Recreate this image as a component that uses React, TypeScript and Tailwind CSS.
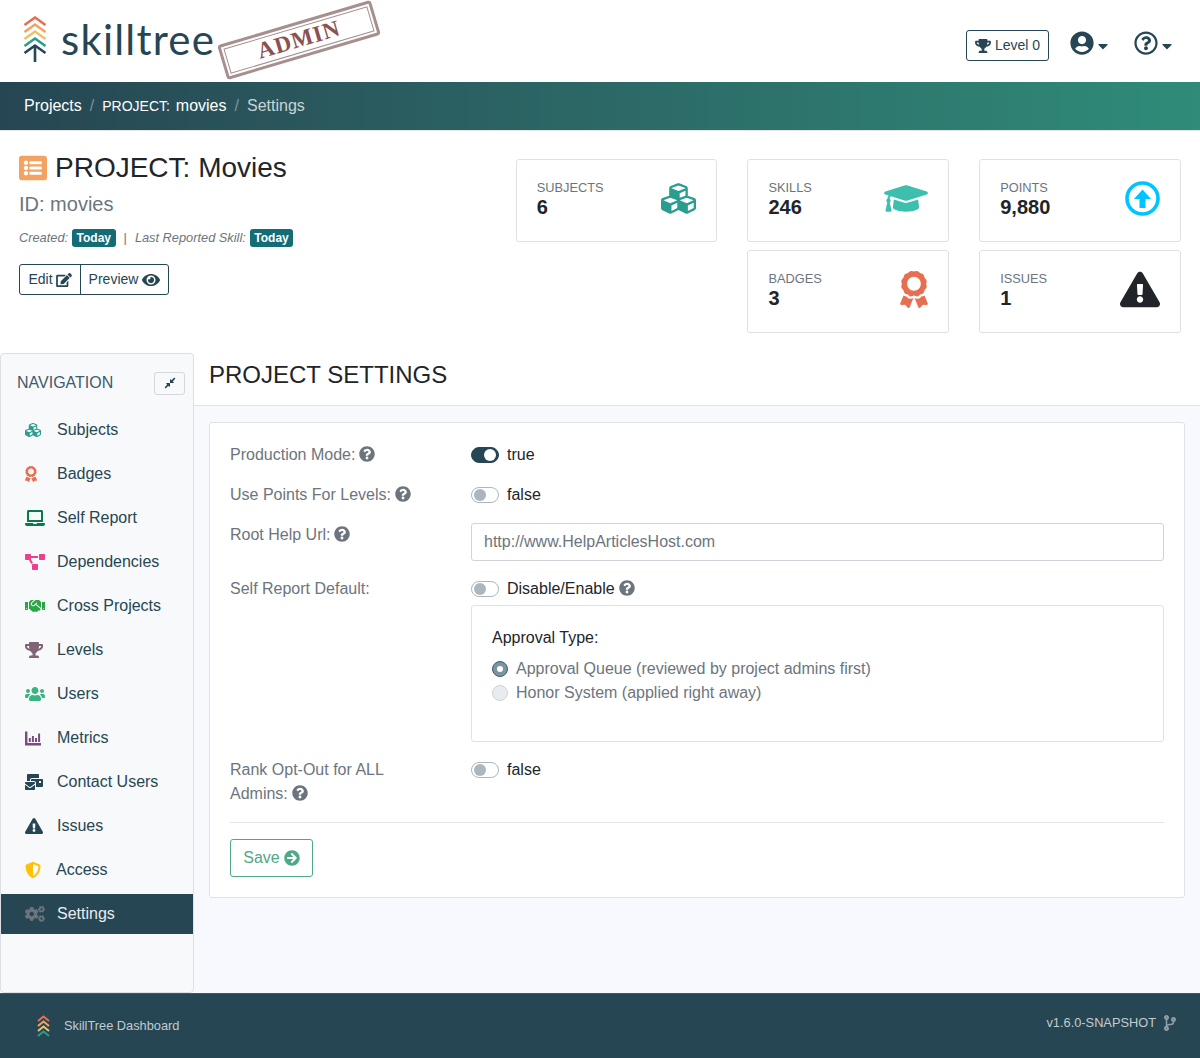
import React from "react";
import {
  FaAward,
  FaArrowCircleRight,
  FaCaretDown,
  FaCodeBranch,
  FaCogs,
  FaCompressAlt,
  FaCubes,
  FaEdit,
  FaExclamationTriangle,
  FaEye,
  FaGraduationCap,
  FaHandshake,
  FaLaptop,
  FaListAlt,
  FaMailBulk,
  FaProjectDiagram,
  FaQuestionCircle,
  FaRegQuestionCircle,
  FaShieldAlt,
  FaTrophy,
  FaUserCircle,
  FaUsers,
} from "react-icons/fa";

const MetricsIcon = ({ className }: { className?: string }) => (
  <svg viewBox="0 0 16 16" className={className} fill="currentColor">
    <path d="M0 1.5h2.4v11.6H16v2.4H0z" />
    <path d="M3.8 8h2v4H3.8zM6.9 6h2v6h-2zM10 8h2v4h-2zM13.1 3.5h2V12h-2z" />
  </svg>
);

const PointsIcon = ({ className }: { className?: string }) => (
  <svg viewBox="0 0 35 35" className={className} fill="none">
    <circle cx="17.5" cy="17.5" r="15.5" stroke="currentColor" strokeWidth="3.6" />
    <path d="M17.5 8.5 26 18h-5.5v9h-6v-9H9z" fill="currentColor" />
  </svg>
);

const TreeLogo = ({ className }: { className?: string }) => (
  <svg viewBox="0 0 24 46" className={className} fill="none" strokeWidth="2.6">
    <path d="M1.5 9 12 1.5 22.5 9" stroke="#e76f51" />
    <path d="M1.5 16 12 8.5 22.5 16" stroke="#f4a261" />
    <path d="M1.5 23 12 15.5 22.5 23" stroke="#e9c46a" />
    <path d="M1.5 30 12 22.5 22.5 30" stroke="#2a9d8f" />
    <path d="M1.5 37 12 29.5 22.5 37M12 30v16" stroke="#264653" />
  </svg>
);

const FooterLogo = ({ className }: { className?: string }) => (
  <svg viewBox="0 0 13 22" className={className} fill="none" strokeWidth="2">
    <path d="M1 6 6.500 1.500 12 6" stroke="#e76f51" />
    <path d="M1 11 6.500 6.500 12 11" stroke="#f4a261" />
    <path d="M1 16 6.500 11.500 12 16" stroke="#e9c46a" />
    <path d="M1 21 6.500 16.500 12 21" stroke="#2a9d8f" />
  </svg>
);

const Help = () => <FaQuestionCircle className="ml-[4px] inline-block align-[-2px] text-[16px] text-[#6c757d]" />;

const Toggle = ({ on = false }: { on?: boolean }) => (
  <span
    className={`flex h-4 w-7 shrink-0 items-center rounded-full border ${
      on ? "justify-end bg-[#264653] border-[#264653]" : "justify-start bg-white border-[#adb5bd]"
    }`}
  >
    <span className={`mx-[2px] h-3 w-3 rounded-full ${on ? "bg-white" : "bg-[#adb5bd]"}`} />
  </span>
);

const stats = [
  { label: "Subjects", value: "6", icon: <FaCubes className="h-[35px] w-[35px] text-[#2a9d8f]" /> },
  { label: "Skills", value: "246", icon: <FaGraduationCap className="h-[35px] w-[44px] text-[#3dbfae]" /> },
  { label: "Points", value: "9,880", icon: <PointsIcon className="h-[35px] w-[35px] text-[#00c3ff]" /> },
  null,
  { label: "Badges", value: "3", icon: <FaAward className="-mt-[1px] h-[37px] w-[28px] text-[#e76f51]" /> },
  { label: "Issues", value: "1", icon: <FaExclamationTriangle className="-mt-[1px] h-[37px] w-[40px] text-[#212529]" /> },
];

const navItems = [
  { label: "Subjects", icon: <FaCubes className="h-4 w-4 text-[#2a9d8f]" /> },
  { label: "Badges", icon: <FaAward className="h-4 w-3 text-[#e76f51]" /> },
  { label: "Self Report", icon: <FaLaptop className="h-4 w-5 text-[#0b7a4b]" /> },
  { label: "Dependencies", icon: <FaProjectDiagram className="h-4 w-5 text-[#ec3f8e]" /> },
  { label: "Cross Projects", icon: <FaHandshake className="h-4 w-5 text-[#28a745]" /> },
  { label: "Levels", icon: <FaTrophy className="h-4 w-[18px] text-[#7f6478]" /> },
  { label: "Users", icon: <FaUsers className="h-4 w-5 text-[#3cb482]" /> },
  { label: "Metrics", icon: <MetricsIcon className="h-4 w-4 text-[#7a4a80]" /> },
  { label: "Contact Users", icon: <FaMailBulk className="h-4 w-[18px] text-[#264653]" /> },
  { label: "Issues", icon: <FaExclamationTriangle className="h-4 w-[18px] text-[#264653]" /> },
  { label: "Access", icon: <FaShieldAlt className="h-4 w-4 text-[#ffc107]" />, tight: true },
  { label: "Settings", icon: <FaCogs className="h-4 w-5 text-[#6c757d]" />, active: true },
];

export default function App() {
  return (
    <div className="flex min-h-[1058px] flex-col bg-white font-['Liberation_Sans',sans-serif] text-[16px] text-[#212529]">
      <header className="relative flex h-[82px] items-center justify-between pl-[23px] pr-[28px]">
        <div className="flex items-center gap-[14px] pb-[4px]">
          <TreeLogo className="h-[46px] w-6" />
          <span className="font-['Lato',sans-serif] text-[42px] leading-none tracking-[1.2px] text-[#264653]">skilltree</span>
        </div>
        <div className="absolute left-[219px] top-[22px] flex h-[36px] w-[160px] -rotate-[16.5deg] items-center justify-center rounded-[3px] border-[3px] border-[#a58f8f] p-[2px]">
          <div className="flex h-full w-full items-center justify-center border border-[#a58f8f]">
            <span className="font-['Liberation_Serif',serif] text-[23px] font-bold tracking-[1px] text-[#8b5252]">ADMIN</span>
          </div>
        </div>
        <div className="flex items-center pt-[9px] text-[#264653]">
          <div className="flex h-[31px] w-[83px] items-center justify-center gap-[4px] rounded-[3px] border border-[#264653] text-[14px]">
            <FaTrophy className="h-[14px] w-4" />
            Level 0
          </div>
          <div className="ml-[21px] flex items-center">
            <FaUserCircle className="mb-[5px] h-6 w-6" />
            <FaCaretDown className="ml-[4px] h-4 w-[10px]" />
          </div>
          <div className="ml-[26px] flex items-center">
            <FaRegQuestionCircle className="mb-[5px] h-6 w-6" />
            <FaCaretDown className="ml-[4px] h-4 w-[10px]" />
          </div>
        </div>
      </header>

      <nav className="flex h-[48px] items-center bg-gradient-to-r from-[#264653] to-[#2f8c79] pl-[24px] text-white">
        <span>Projects</span>
        <span className="mx-[8px] text-white/40">/</span>
        <span>
          <span className="mr-[2px] text-[14px]">PROJECT: </span>movies
        </span>
        <span className="mx-[8px] text-white/40">/</span>
        <span className="text-white/75">Settings</span>
      </nav>

      <section className="flex h-[223px] border-t border-[#e4e6e8] pl-[19px] pr-[19px]">
        <div className="w-[496.7px] pt-[20px]">
          <div className="flex items-center">
            <FaListAlt className="h-7 w-7 text-[#f4a261]" />
            <h1 className="ml-[8px] text-[28px] leading-[34px]">PROJECT: Movies</h1>
          </div>
          <div className="mt-[7px] text-[20px] leading-[24px] text-[#6c757d]">ID: movies</div>
          <div className="mt-[12px] flex items-center text-[12.8px] italic text-[#6c757d]">
            <span>Created:</span>
            <span className="ml-[4px] rounded-[3px] bg-[#146c75] px-[4.5px] text-[12px] font-bold not-italic leading-[18px] text-white">Today</span>
            <span className="mx-[8px] not-italic">|</span>
            <span>Last Reported Skill:</span>
            <span className="ml-[4px] rounded-[3px] bg-[#146c75] px-[4.5px] text-[12px] font-bold not-italic leading-[18px] text-white">Today</span>
          </div>
          <div className="mt-[17px] flex h-[31px] w-[150px] items-center rounded-[3px] border border-[#264653] text-[14px] text-[#264653]">
            <span className="flex h-full w-[61px] items-center justify-center gap-[3px] border-r border-[#264653]">
              Edit <FaEdit className="h-[14px] w-4" />
            </span>
            <span className="flex flex-1 items-center justify-center gap-[4px]">
              Preview <FaEye className="h-4 w-[18px]" />
            </span>
          </div>
        </div>
        <div className="grid flex-1 grid-cols-3 content-start gap-x-[30px] gap-y-[8px] pt-[28px]">
          {stats.map((s, i) =>
            s ? (
              <div key={s.label} className="flex h-[83px] items-start justify-between rounded-[3px] border border-[#dfe1e3] bg-white pl-[20px] pr-[20px] pt-[20px]">
                <div>
                  <div className="text-[12.8px] uppercase leading-[16px] text-[#6c757d]">{s.label}</div>
                  <div className="text-[20px] font-bold leading-[22px]">{s.value}</div>
                </div>
                <div className="pt-[1px]">{s.icon}</div>
              </div>
            ) : (
              <div key={i} />
            ),
          )}
        </div>
      </section>

      <div className="flex flex-1">
        <aside className="h-[640px] w-[194px] shrink-0 rounded-[4px] border border-[#dcdfe3] bg-[#f8f9fa]">
          <div className="flex h-[56px] items-center justify-between pl-[16px] pr-[8px] pt-[2px]">
            <span className="text-[#3f5a70]">NAVIGATION</span>
            <span className="flex h-[23px] w-[31px] items-center justify-center rounded-[3px] border border-[#d5d8db] bg-[#f8f9fa]">
              <FaCompressAlt className="h-3 w-3 text-[#264653]" />
            </span>
          </div>
          {navItems.map((n) => (
            <div
              key={n.label}
              className={`mb-[4px] flex h-[40px] items-center pl-[24px] ${n.active ? "bg-[#264653] text-white" : "text-[#264653]"}`}
            >
              <span className={`flex items-center ${n.tight ? "w-[31px]" : "w-[32px]"}`}>{n.icon}</span>
              <span className={n.active ? "opacity-90" : ""}>{n.label}</span>
            </div>
          ))}
        </aside>

        <main className="flex-1 bg-[#f8f9fe]">
          <div className="flex h-[53px] items-center border-b border-[#dfe2e6] bg-white pb-[8px] pl-[15px]">
            <h2 className="text-[24px] leading-[28px]">PROJECT SETTINGS</h2>
          </div>
          <div className="ml-[15px] mr-[15px] mt-[16px] rounded-[3px] border border-[#dfe2e6] bg-white p-[20px]">
            <div className="mb-[16px] flex leading-[24px]">
              <div className="w-[241px] text-[#6c757d]">Production Mode:<Help /></div>
              <div className="flex items-center gap-[8px]"><Toggle on /> true</div>
            </div>
            <div className="mb-[16px] flex leading-[24px]">
              <div className="w-[241px] text-[#6c757d]">Use Points For Levels:<Help /></div>
              <div className="flex items-center gap-[8px]"><Toggle /> false</div>
            </div>
            <div className="mb-[16px] flex leading-[24px]">
              <div className="w-[241px] text-[#6c757d]">Root Help Url:<Help /></div>
              <div className="flex h-[38px] flex-1 items-center rounded-[3px] border border-[#ced4da] px-[12px] text-[#6c757d]">http://www.HelpArticlesHost.com</div>
            </div>
            <div className="mb-[16px] flex leading-[24px]">
              <div className="w-[241px] text-[#6c757d]">Self Report Default:</div>
              <div className="flex-1">
                <div className="flex items-center gap-[8px]">
                  <Toggle />
                  <span>Disable/Enable<Help /></span>
                </div>
                <div className="mt-[4px] h-[137px] rounded-[3px] border border-[#dfe2e6] p-[20px]">
                  <div className="mb-[7px]">Approval Type:</div>
                  <div className="flex items-center gap-[8px] text-[#6c757d]">
                    <span className="flex h-4 w-4 items-center justify-center rounded-full border border-[#3d5f6d] bg-[#7a95a0]">
                      <span className="h-[6px] w-[6px] rounded-full bg-white" />
                    </span>
                    Approval Queue (reviewed by project admins first)
                  </div>
                  <div className="flex items-center gap-[8px] text-[#6c757d]">
                    <span className="h-4 w-4 rounded-full border border-[#ced4da] bg-[#e9ecef]" />
                    Honor System (applied right away)
                  </div>
                </div>
              </div>
            </div>
            <div className="mb-[16px] flex leading-[24px]">
              <div className="w-[241px] pr-[60px] text-[#6c757d]">Rank Opt-Out for ALL Admins:<Help /></div>
              <div className="flex h-[24px] items-center gap-[8px]"><Toggle /> false</div>
            </div>
            <hr className="border-[#e3e5e7]" />
            <div className="mt-[16px] flex h-[38px] w-[83px] items-center justify-center gap-[4px] rounded-[3px] border border-[#4fa887] text-[#4fa887]">
              Save <FaArrowCircleRight className="h-4 w-4" />
            </div>
          </div>
        </main>
      </div>

      <footer className="flex h-[65px] justify-between border-t border-[#236571] bg-[#264653] pl-[37px] pr-[24px] text-[#c3cbcf]">
        <div className="flex items-center gap-[14px] pb-[1px] text-[12.8px]">
          <FooterLogo className="h-[22px] w-[13px]" />
          SkillTree Dashboard
        </div>
        <div className="flex items-center gap-[8px] pb-[7px] text-[12.8px]">
          v1.6.0-SNAPSHOT
          <FaCodeBranch className="h-4 w-3 text-[#8fa0a8]" />
        </div>
      </footer>
    </div>
  );
}
